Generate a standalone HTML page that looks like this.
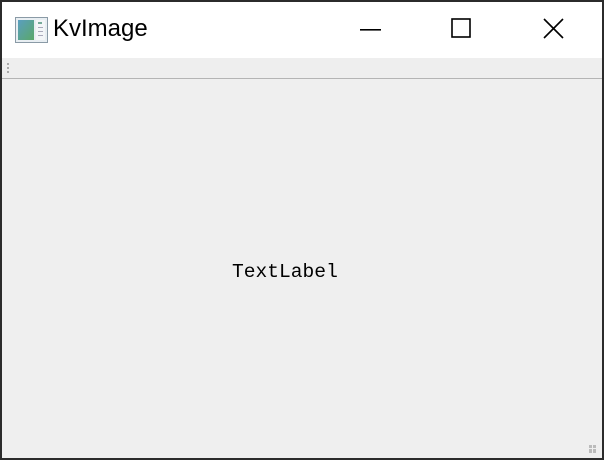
<!DOCTYPE html>
<html><head><style>
html,body{margin:0;padding:0;}
body{width:604px;height:460px;position:relative;overflow:hidden;background:#2b2b2b;font-family:"Liberation Sans",sans-serif;}
.win{position:absolute;left:2px;top:2px;width:600px;height:456px;background:#efefef;}
.title{position:absolute;left:0;top:0;width:600px;height:56px;background:#fff;}
.tt{position:absolute;left:51px;top:13px;font-size:24px;color:#000;font-family:"Liberation Sans","DejaVu Sans",sans-serif;}
.tb{position:absolute;left:0;top:56px;width:600px;height:20px;background:#eeeeee;border-bottom:1px solid #b4b4b4;}
.lbl{position:absolute;left:230px;top:259px;font-family:"Liberation Mono","Noto Serif CJK SC",monospace;font-size:19.6px;color:#000;}
</style></head><body>
<div class="win">
 <div class="title">
  <svg style="position:absolute;left:13px;top:15px" width="33" height="26">
   <rect x="0.5" y="0.5" width="32" height="25" fill="#e8eef2" stroke="#8a9aa6"/>
   <defs><linearGradient id="g" x1="0" y1="0" x2="1" y2="1"><stop offset="0" stop-color="#5a9ec0"/><stop offset="1" stop-color="#5aa868"/></linearGradient></defs>
   <rect x="3" y="3" width="16" height="20" fill="url(#g)"/>
   <rect x="21" y="3" width="9" height="20" fill="#f4f6f8"/>
   <rect x="23" y="5" width="4" height="2" fill="#7a9"/><rect x="23" y="10" width="5" height="1" fill="#aab"/><rect x="23" y="14" width="5" height="1" fill="#aab"/><rect x="23" y="18" width="5" height="1" fill="#aab"/>
  </svg>
  <div class="tt">KvImage</div>
  <svg style="position:absolute;left:358px;top:26px" width="22" height="4"><rect x="0" y="1" width="21" height="1.6" fill="#000"/></svg>
  <svg style="position:absolute;left:449px;top:16px" width="22" height="22"><rect x="1" y="1" width="18" height="18" fill="none" stroke="#000" stroke-width="1.6"/></svg>
  <svg style="position:absolute;left:541px;top:16px" width="22" height="22"><path d="M1 1L20 20M20 1L1 20" stroke="#000" stroke-width="1.6"/></svg>
 </div>
 <div class="tb">
  <svg style="position:absolute;left:5px;top:5px" width="3" height="12"><rect y="0" width="2" height="2" fill="#aaa"/><rect y="4" width="2" height="2" fill="#aaa"/><rect y="8" width="2" height="2" fill="#aaa"/></svg>
 </div>
 <div class="lbl">TextLabel</div>
 <svg style="position:absolute;left:587px;top:443px" width="9" height="9"><rect x="0" y="0" width="3" height="3" fill="#bbb"/><rect x="4" y="0" width="3" height="3" fill="#bbb"/><rect x="0" y="4" width="3" height="4" fill="#bbb"/><rect x="4" y="4" width="3" height="4" fill="#bbb"/></svg>
</div>
</body></html>
